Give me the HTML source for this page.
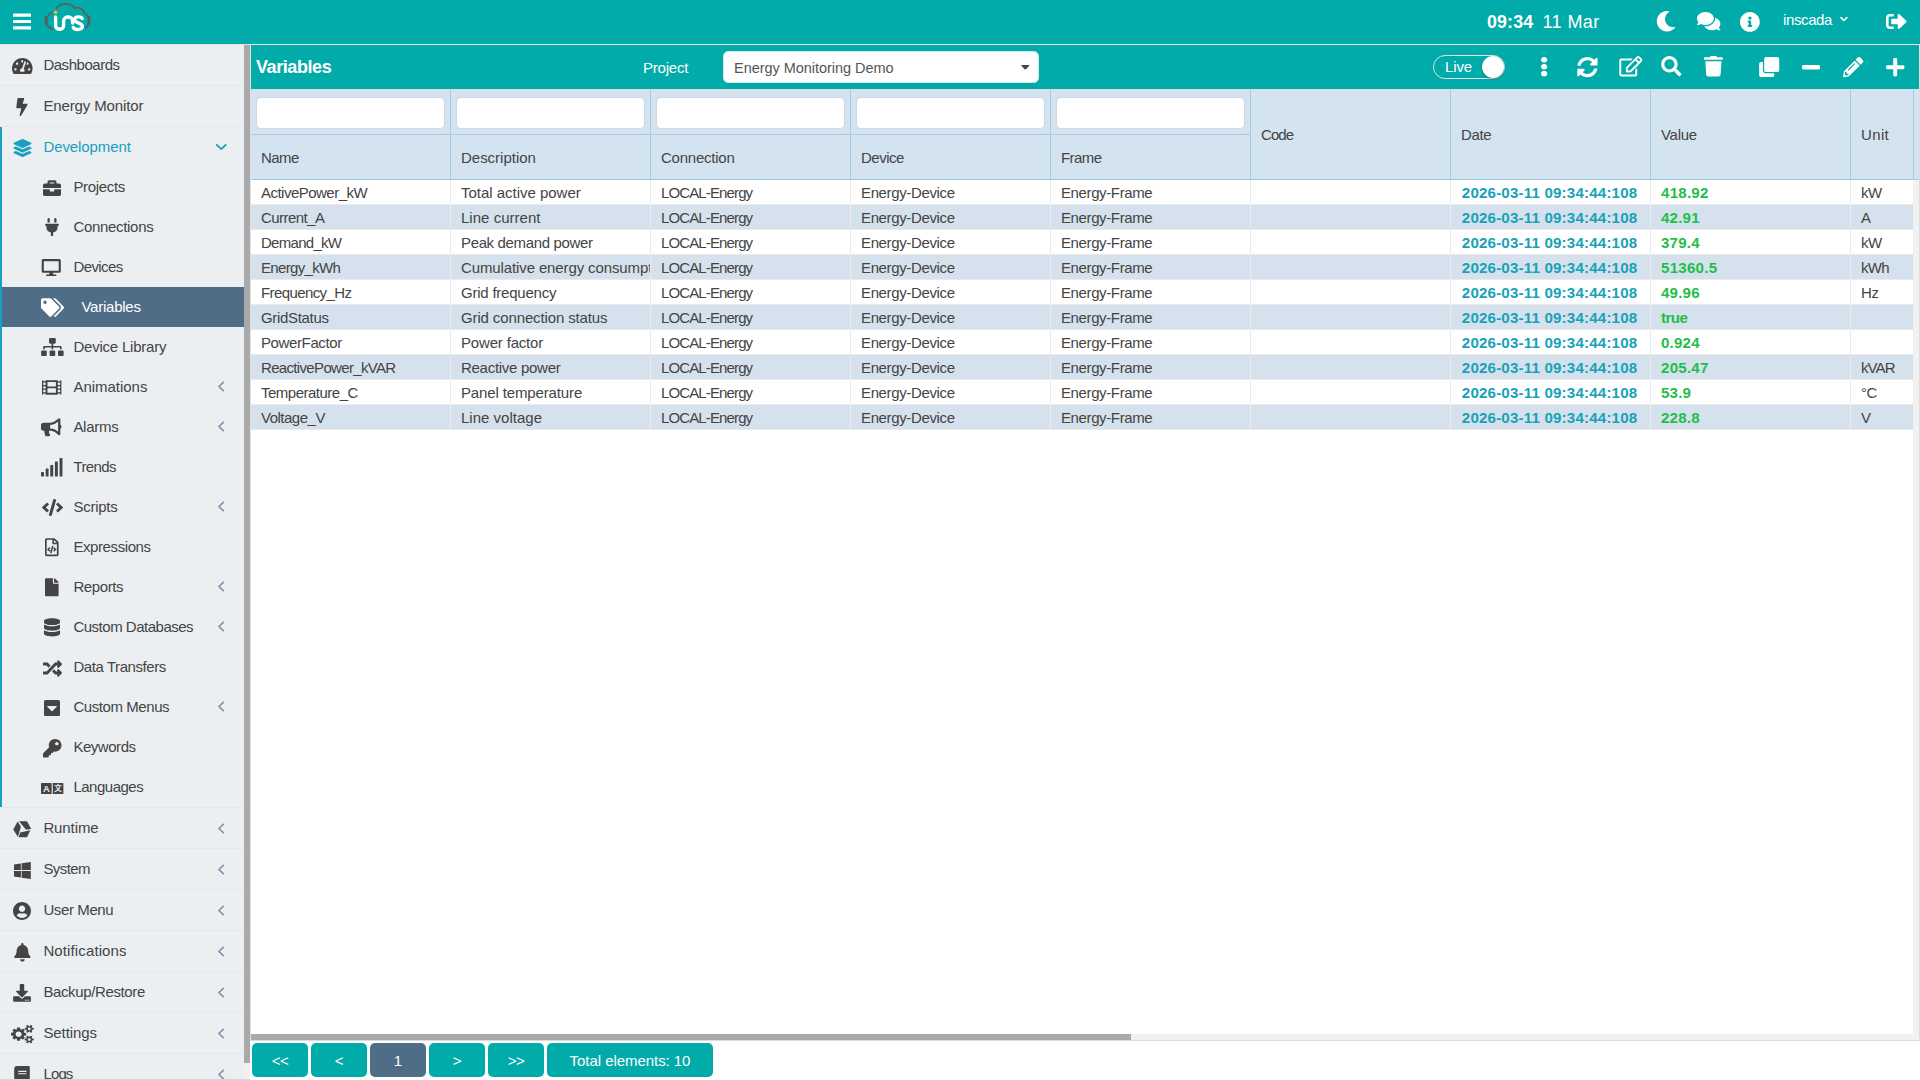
<!DOCTYPE html><html><head><meta charset="utf-8"><title>Variables</title><style>
*{box-sizing:border-box}
html,body{margin:0;padding:0}
body{width:1920px;height:1080px;overflow:hidden;position:relative;background:#fff;font-family:"Liberation Sans", sans-serif;font-size:15.0px;color:#444444;}
.ic{position:absolute;display:block;overflow:visible}
.t{white-space:nowrap}
.abs{position:absolute}
#topbar{position:absolute;left:0;top:0;width:1920px;height:45px;background:#00abaa;border-bottom:1px solid #ebe3e3}
#clock{position:absolute;left:1487px;top:0;line-height:45px;color:#fff;font-family:"Liberation Sans", sans-serif;font-size:17.3px;white-space:nowrap}
#clock b{font-size:17.8px;letter-spacing:.15px}
#clock span{margin-left:9.3px;font-size:18px;letter-spacing:.4px}
#side{position:absolute;left:0;top:45px;width:244px;height:1035px;background:#ebeff2;overflow:hidden}
.mi{position:absolute;left:0;width:244px;height:41px;border-bottom:1px solid #e3e6ea;}
.mi .t,.si .t{position:absolute;top:0;line-height:40px}
.mi .t{left:43.4px}
.si{position:absolute;left:2px;width:242px;height:40px}
.si .t{left:71.4px}
.si.act{background:#4f6d87;color:#fff}
.si.act .t{left:79.4px}
#sscroll{position:absolute;left:244px;top:45px;width:6px;height:1035px;background:#f1f1f1}
#sscroll i{position:absolute;left:0;top:0;width:6px;height:1018px;background:#a9a9a9}
#panel{position:absolute;left:250px;top:45px;width:1670px;height:996px;border-left:1px solid #e3dede;border-right:1px solid #dedede;border-bottom:1px solid #dcdcdc;background:#fff}
#phead{position:absolute;left:0;top:0;width:1668px;height:44px;background:#00abaa}
#title{position:absolute;left:5px;top:0;line-height:44px;font-family:"Liberation Sans", sans-serif;font-weight:bold;font-size:18px;letter-spacing:-.42px;color:#fff}
#pline{position:absolute;left:0;top:44px;width:1668px;height:1px;background:#dcdcdc}
#thead{position:absolute;left:0;top:45px;width:1668px;height:90px;background:#d4e3f0;border-bottom:1px solid #9fc9e3}
.hc{position:absolute;top:0;height:89px;border-right:1px solid #a9cbe2}
.hc .fl{position:absolute;left:0;right:0;top:0;height:45px;border-bottom:1px solid #a9cbe2}
.fi{position:absolute;left:5px;top:7px;width:189px;height:32px;background:#fff;border:1px solid #ccd7e7;border-radius:5px}
.hc .t{position:absolute;left:10px}
.row{position:absolute;left:0;width:1662px;height:25px;line-height:25px}
.row.s{background:#d5e1ed}
.c{position:absolute;top:0;height:25px;overflow:hidden;border-right:1px solid #ebebeb;border-bottom:1px solid #ebebeb;padding-left:10px}
.c.d{padding-left:10.8px;color:#17a2b8;font-weight:bold;font-size:15.1px;line-height:25.6px}
.c.v{color:#1fbe4a;font-weight:bold;font-size:15.1px;line-height:25.6px}
.btn{position:absolute;top:998px;height:34px;border-radius:5px;background:#00abaa;color:#fff;text-align:center;line-height:36.5px}
</style></head><body>
<div id="topbar">
<svg class="ic" style="left:13px;top:13px" width="18" height="17" viewBox="0 0 18 17" fill="#fff"><rect x="0" y="0.6" width="18" height="3.2" rx=".5"/><rect x="0" y="7" width="18" height="3" rx=".5"/><rect x="0" y="13.3" width="18" height="3.1" rx=".5"/></svg>
<svg class="ic" style="left:40px;top:0px" width="60" height="40" viewBox="0 0 60 40" fill="none" stroke-linecap="round" stroke-linejoin="round">
<g stroke="#5e5b5d" stroke-width="1.7">
<path d="M11.6 12.6 C7.6 15.2 6 18.6 6.2 21.6 C6.4 24.6 8.6 27.6 12.3 29.2"/>
<path d="M16.6 8.4 C18.4 5.4 22 3.7 26 3.8 C29.6 3.9 32.8 5.6 34.6 8.2 C36.6 7.4 39 7.4 41 8.6 C43 9.8 44.2 11.4 44.5 13.4 C47 15 48.7 17.6 48.9 20.4 C49.1 23.2 47.8 26 45.6 28"/>
</g>
<path d="M6.1 17.4 V23.6" stroke="#5e5b5d" stroke-width="2.6"/>
<path d="M49 17.6 V23.4" stroke="#5e5b5d" stroke-width="2.6"/>
<circle cx="15.5" cy="12.2" r="1.75" fill="#fdb714"/>
<g stroke="#fff" stroke-width="3.4">
<path d="M15.6 17 V25.6 C15.6 30.4 23.6 30.4 23.6 25.6 V21 C23.6 15.6 32.6 15.6 32.6 21 V23"/>
<path d="M42.2 18.6 C41.2 16.4 35.2 16 34.4 19.6 C33.8 22.6 41.8 22.8 42.4 26 C43 29.8 35.4 30.8 33.2 27.4"/>
</g></svg>
<span id="clock"><b>09:34</b><span>11 Mar</span></span>
<svg class="ic" style="left:1656.00px;top:11.00px" width="20.00" height="20.60" viewBox="27 0 459 512" preserveAspectRatio="xMidYMid meet" fill="#fff" ><path d="M283.211 512c78.962 0 151.079-35.925 198.857-94.792 7.068-8.708-.639-21.43-11.562-19.35-124.203 23.654-238.262-71.576-238.262-196.954 0-72.222 38.662-138.635 101.498-174.394 9.686-5.512 7.25-20.197-3.756-22.23A258.156 258.156 0 0 0 283.211 0c-141.309 0-256 114.511-256 256 0 141.309 114.511 256 256 256z"/></svg>
<svg class="ic" style="left:1697.40px;top:12.30px" width="23.40" height="18.20" viewBox="0 32 576 448" preserveAspectRatio="xMidYMid meet" fill="#fff" ><path d="M416 192c0-88.400-93.100-160-208-160S0 103.600 0 192c0 34.300 14.100 65.900 38 92-13.400 30.200-35.500 54.200-35.800 54.500-2.200 2.300-2.800 5.700-1.500 8.700S4.800 352 8 352c36.600 0 66.900-12.300 88.700-25 32.200 15.700 70.300 25 111.300 25 114.900 0 208-71.600 208-160zm122 220c23.900-26 38-57.700 38-92 0-66.900-53.500-124.200-129.300-148.100.9 6.600 1.300 13.300 1.300 20.100 0 105.900-107.700 192-240 192-10.800 0-21.300-.800-31.700-1.900C207.800 439.600 281.800 480 368 480c41 0 79.100-9.200 111.300-25 21.800 12.700 52.100 25 88.700 25 3.200 0 6.100-1.900 7.300-4.800 1.300-2.900.7-6.300-1.500-8.700-.3-.300-22.400-24.200-35.800-54.500z"/></svg>
<svg class="ic" style="left:1740.20px;top:11.60px" width="19.80" height="19.80" viewBox="8 8 496 496" preserveAspectRatio="xMidYMid meet" fill="#fff" ><path d="M256 8C119.043 8 8 119.083 8 256c0 136.997 111.043 248 248 248s248-111.003 248-248C504 119.083 392.957 8 256 8zm0 110c23.196 0 42 18.804 42 42s-18.804 42-42 42-42-18.804-42-42 18.804-42 42-42zm56 254c0 6.627-5.373 12-12 12h-88c-6.627 0-12-5.373-12-12v-24c0-6.627 5.373-12 12-12h12v-64h-12c-6.627 0-12-5.373-12-12v-24c0-6.627 5.373-12 12-12h64c6.627 0 12 5.373 12 12v100h12c6.627 0 12 5.373 12 12v24z"/></svg>
<span class="abs" style="left:1783px;top:0;line-height:39px;color:#fff"><span class="t " style="letter-spacing:-0.380px;">inscada</span></span>
<svg class="ic" style="left:1838px;top:14px" width="12" height="10" viewBox="0 0 12 10" fill="none" stroke="#fff" stroke-width="1.6" stroke-linecap="round" stroke-linejoin="round"><path d="M3 3.6 L5.9 6.5 L8.8 3.6"/></svg>
<svg class="ic" style="left:1885.50px;top:14.10px" width="20.50" height="15.00" viewBox="0 64 504 384" preserveAspectRatio="none" fill="#fff" ><path d="M497 273L329 441c-15 15-41 4.500-41-17v-96H152c-13.300 0-24-10.700-24-24v-96c0-13.300 10.700-24 24-24h136V88c0-21.400 25.900-32 41-17l168 168c9.300 9.400 9.300 24.600 0 34zM192 436v-40c0-6.600-5.400-12-12-12H96c-17.700 0-32-14.300-32-32V160c0-17.700 14.300-32 32-32h84c6.600 0 12-5.400 12-12V76c0-6.600-5.400-12-12-12H96c-53 0-96 43-96 96v192c0 53 43 96 96 96h84c6.600 0 12-5.400 12-12z"/></svg>
</div>
<div id="side">
<div class="mi" style="top:0px;"><svg class="ic" style="left:11.70px;top:13.00px" width="20.60" height="16.00" viewBox="0 32 576 448" preserveAspectRatio="xMidYMid meet" fill="#444" ><path d="M288 32C128.940 32 0 160.940 0 320c0 52.800 14.250 102.260 39.060 144.800 5.610 9.620 16.300 15.200 27.440 15.200h443c11.140 0 21.830-5.580 27.440-15.200C561.750 422.260 576 372.800 576 320c0-159.060-128.940-288-288-288zm0 64c14.710 0 26.580 10.130 30.320 23.650-1.110 2.260-2.640 4.230-3.450 6.670l-9.220 27.670c-5.130 3.490-10.970 6.010-17.640 6.010-17.670 0-32-14.330-32-32S270.330 96 288 96zM96 384c-17.670 0-32-14.330-32-32s14.330-32 32-32 32 14.330 32 32-14.330 32-32 32zm48-160c-17.670 0-32-14.330-32-32s14.330-32 32-32 32 14.330 32 32-14.330 32-32 32zm246.770-72.410l-61.330 184C343.130 347.330 352 364.540 352 384c0 11.720-3.380 22.550-8.880 32H232.880c-5.500-9.450-8.880-20.280-8.880-32 0-33.940 26.500-61.430 59.900-63.590l61.340-184.010c4.170-12.560 17.730-19.450 30.360-15.170 12.570 4.190 19.350 17.790 15.170 30.360zm14.660 57.200l15.520-46.550c3.470-1.290 7.130-2.230 11.050-2.230 17.670 0 32 14.330 32 32s-14.330 32-32 32c-11.380-.010-20.890-6.280-26.570-15.220zM480 384c-17.670 0-32-14.330-32-32s14.330-32 32-32 32 14.330 32 32-14.330 32-32 32z"/></svg><span class="t " style="letter-spacing:-0.472px;">Dashboards</span></div>
<div class="mi" style="top:41px;"><svg class="ic" style="left:16.00px;top:12.00px" width="11.80" height="18.00" viewBox="0 0 320 512" preserveAspectRatio="xMidYMid meet" fill="#444" ><path d="M296 160H180.600l42.600-129.800C227.200 15 215.700 0 200 0H56C44 0 33.800 8.900 32.200 20.800l-32 240C-1.700 275.200 9.500 288 24 288h118.700L96.600 482.500c-3.600 15.200 8 29.500 23.300 29.500 8.400 0 16.400-4.400 20.800-12l176-304c9.300-15.900-2.200-36-20.700-36z"/></svg><span class="t " style="letter-spacing:-0.131px;">Energy Monitor</span></div>
<div class="abs" style="left:0;top:82px;width:2px;height:680px;background:#1a9fbe"></div>
<div class="mi" style="top:82px;color:#1a9fbe;border-bottom:none;"><svg class="ic" style="left:12.80px;top:11.80px" width="19.00" height="18.00" viewBox="0 0 512 512" preserveAspectRatio="xMidYMid meet" fill="#1a9fbe" ><path d="M12.410 148.020l232.940 105.670c6.800 3.090 14.490 3.090 21.290 0l232.940-105.670c16.550-7.510 16.550-32.520 0-40.030L266.650 2.310a25.607 25.607 0 0 0-21.290 0L12.410 107.980c-16.550 7.510-16.550 32.530 0 40.040zm487.180 88.280l-58.090-26.330-161.640 73.270c-7.560 3.430-15.590 5.170-23.860 5.170s-16.290-1.740-23.860-5.170L70.510 209.970l-58.100 26.330c-16.550 7.500-16.550 32.500 0 40l232.940 105.590c6.800 3.080 14.490 3.080 21.290 0L499.590 276.300c16.550-7.500 16.550-32.500 0-40zm0 127.800l-57.870-26.230-161.860 73.370c-7.560 3.430-15.590 5.170-23.860 5.170s-16.290-1.740-23.860-5.170L70.290 337.870 12.410 364.100c-16.550 7.500-16.550 32.500 0 40l232.940 105.590c6.800 3.080 14.490 3.080 21.290 0L499.590 404.100c16.550-7.500 16.550-32.500 0-40z"/></svg><span class="t " style="letter-spacing:-0.092px;">Development</span><svg class="ic" style="left:214px;top:14px" width="14" height="12" viewBox="0 0 14 12" fill="none" stroke="#1a9fbe" stroke-width="1.8" stroke-linecap="round" stroke-linejoin="round"><path d="M2.8 3.8 L7.3 8.2 L11.7 3.8"/></svg></div>
<div class="si" style="top:122px"><svg class="ic" style="left:41.00px;top:12.50px" width="18.00" height="16.00" viewBox="0 32 512 448" preserveAspectRatio="xMidYMid meet" fill="#444" ><path d="M320 336c0 8.840-7.160 16-16 16h-96c-8.840 0-16-7.160-16-16v-48H0v144c0 25.600 22.400 48 48 48h416c25.600 0 48-22.400 48-48V288H320v48zm144-208h-80V80c0-25.600-22.400-48-48-48H176c-25.600 0-48 22.400-48 48v48H48c-25.600 0-48 22.400-48 48v80h512v-80c0-25.600-22.400-48-48-48zm-144 0H192V96h128v32z"/></svg><span class="t " style="letter-spacing:-0.335px;">Projects</span></div>
<div class="si" style="top:162px"><svg class="ic" style="left:43.00px;top:11.00px" width="14.00" height="18.00" viewBox="0 0 384 512" preserveAspectRatio="xMidYMid meet" fill="#444" ><path d="M320 32a32 32 0 0 0-64 0v96h64zm48 128H16a16 16 0 0 0-16 16v32a16 16 0 0 0 16 16h16v32a160.070 160.070 0 0 0 128 156.800V512h64v-99.200A160.070 160.070 0 0 0 352 256v-32h16a16 16 0 0 0 16-16v-32a16 16 0 0 0-16-16zM128 32a32 32 0 0 0-64 0v96h64z"/></svg><span class="t " style="letter-spacing:-0.312px;">Connections</span></div>
<div class="si" style="top:202px"><svg class="ic" style="left:39.00px;top:12.00px" width="20.50" height="17.00" viewBox="0 0 576 512" preserveAspectRatio="xMidYMid meet" fill="#444" ><path d="M528 0H48C21.500 0 0 21.500 0 48v320c0 26.500 21.500 48 48 48h192l-16 48h-72c-13.300 0-24 10.700-24 24s10.700 24 24 24h272c13.300 0 24-10.700 24-24s-10.700-24-24-24h-72l-16-48h192c26.500 0 48-21.500 48-48V48c0-26.500-21.500-48-48-48zm-16 352H64V64h448v288z"/></svg><span class="t " style="letter-spacing:-0.581px;">Devices</span></div>
<div class="si act" style="top:242px"><svg class="ic" style="left:38.50px;top:10.50px" width="23.00" height="19.00" viewBox="0 0 640 512" preserveAspectRatio="xMidYMid meet" fill="#fff" ><path d="M497.941 225.941L286.059 14.059A48 48 0 0 0 252.118 0H48C21.490 0 0 21.490 0 48v204.118a48 48 0 0 0 14.059 33.941l211.882 211.882c18.744 18.745 49.136 18.746 67.882 0l204.118-204.118c18.745-18.745 18.745-49.137 0-67.882zM112 160c-26.510 0-48-21.490-48-48s21.490-48 48-48 48 21.490 48 48-21.490 48-48 48zm513.941 133.823L421.823 497.941c-18.745 18.745-49.137 18.745-67.882 0l-.360-.360L527.640 323.522c16.999-16.999 26.360-39.600 26.360-63.640s-9.362-46.641-26.360-63.640L331.397 0h48.721a48 48 0 0 1 33.941 14.059l211.882 211.882c18.745 18.745 18.745 49.137 0 67.882z"/></svg><span class="t " style="letter-spacing:-0.229px;">Variables</span></div>
<div class="si" style="top:282px"><svg class="ic" style="left:38.60px;top:11.00px" width="22.80" height="18.00" viewBox="0 0 640 512" preserveAspectRatio="xMidYMid meet" fill="#444" ><path d="M128 352H32c-17.670 0-32 14.330-32 32v96c0 17.670 14.330 32 32 32h96c17.670 0 32-14.330 32-32v-96c0-17.670-14.330-32-32-32zm-24-80h192v48h48v-48h192v48h48v-57.590c0-21.170-17.230-38.410-38.410-38.410H344v-64h40c17.670 0 32-14.330 32-32V32c0-17.670-14.330-32-32-32H256c-17.670 0-32 14.330-32 32v96c0 17.670 14.330 32 32 32h40v64H94.410C73.230 224 56 241.230 56 262.410V320h48v-48zm264 80h-96c-17.670 0-32 14.330-32 32v96c0 17.670 14.330 32 32 32h96c17.670 0 32-14.330 32-32v-96c0-17.670-14.330-32-32-32zm240 0h-96c-17.670 0-32 14.330-32 32v96c0 17.670 14.330 32 32 32h96c17.670 0 32-14.330 32-32v-96c0-17.670-14.330-32-32-32z"/></svg><span class="t " style="letter-spacing:-0.215px;">Device Library</span></div>
<div class="si" style="top:322px"><svg class="ic" style="left:39.80px;top:11.60px" width="19.40" height="16.80" viewBox="0 64 512 384" preserveAspectRatio="xMidYMid meet" fill="#444" ><path d="M488 64h-8v20c0 6.600-5.400 12-12 12h-40c-6.600 0-12-5.400-12-12V64H96v20c0 6.600-5.400 12-12 12H44c-6.600 0-12-5.400-12-12V64h-8C10.700 64 0 74.700 0 88v336c0 13.300 10.700 24 24 24h8v-20c0-6.600 5.400-12 12-12h40c6.600 0 12 5.400 12 12v20h320v-20c0-6.600 5.400-12 12-12h40c6.600 0 12 5.400 12 12v20h8c13.300 0 24-10.700 24-24V88c0-13.300-10.700-24-24-24zM96 372c0 6.600-5.400 12-12 12H44c-6.600 0-12-5.400-12-12v-40c0-6.600 5.400-12 12-12h40c6.600 0 12 5.400 12 12v40zm0-96c0 6.600-5.400 12-12 12H44c-6.600 0-12-5.400-12-12v-40c0-6.600 5.400-12 12-12h40c6.600 0 12 5.400 12 12v40zm0-96c0 6.600-5.400 12-12 12H44c-6.600 0-12-5.400-12-12v-40c0-6.600 5.400-12 12-12h40c6.600 0 12 5.400 12 12v40zm272 208c0 6.600-5.400 12-12 12H156c-6.600 0-12-5.400-12-12v-96c0-6.600 5.400-12 12-12h200c6.600 0 12 5.400 12 12v96zm0-168c0 6.600-5.400 12-12 12H156c-6.600 0-12-5.400-12-12v-96c0-6.600 5.400-12 12-12h200c6.600 0 12 5.400 12 12v96zm112 152c0 6.600-5.400 12-12 12h-40c-6.600 0-12-5.400-12-12v-40c0-6.600 5.400-12 12-12h40c6.600 0 12 5.400 12 12v40zm0-96c0 6.600-5.400 12-12 12h-40c-6.600 0-12-5.400-12-12v-40c0-6.600 5.400-12 12-12h40c6.600 0 12 5.400 12 12v40zm0-96c0 6.600-5.400 12-12 12h-40c-6.600 0-12-5.400-12-12v-40c0-6.600 5.400-12 12-12h40c6.600 0 12 5.400 12 12v40z"/></svg><span class="t " style="letter-spacing:-0.019px;">Animations</span><svg class="ic" style="left:214px;top:13.3px" width="10" height="14" viewBox="0 0 10 14" fill="none" stroke="#8291a8" stroke-width="1.6" stroke-linecap="round" stroke-linejoin="round"><path d="M7.3 2.3 L2.9 6.5 L7.3 10.7"/></svg></div>
<div class="si" style="top:362px"><svg class="ic" style="left:39.00px;top:11.00px" width="20.50" height="18.50" viewBox="0 0 576 512" preserveAspectRatio="xMidYMid meet" fill="#444" ><path d="M576 240c0-23.630-12.950-44.040-32-55.120V32.010C544 23.260 537.020 0 512 0c-7.120 0-14.190 2.380-19.980 7.020l-85.030 68.030C364.280 109.190 310.660 128 256 128H64c-35.350 0-64 28.650-64 64v96c0 35.350 28.650 64 64 64h33.700c-1.390 10.480-2.180 21.140-2.180 32 0 39.770 9.260 77.350 25.560 110.940 5.190 10.690 16.520 17.060 28.400 17.060h74.280c26.050 0 41.690-29.840 25.900-50.560-16.400-21.520-26.150-48.360-26.150-77.440 0-11.110 1.620-21.790 4.410-32H256c54.660 0 108.280 18.810 150.980 52.950l85.030 68.030a32.023 32.023 0 0 0 19.980 7.020c24.920 0 32-22.780 32-32V295.130C563.050 284.040 576 263.630 576 240zm-96 141.420l-33.050-26.440C392.950 311.780 325.120 288 256 288v-96c69.120 0 136.950-23.780 190.950-66.980L480 98.580v282.840z"/></svg><span class="t " style="letter-spacing:-0.284px;">Alarms</span><svg class="ic" style="left:214px;top:13.3px" width="10" height="14" viewBox="0 0 10 14" fill="none" stroke="#8291a8" stroke-width="1.6" stroke-linecap="round" stroke-linejoin="round"><path d="M7.3 2.3 L2.9 6.5 L7.3 10.7"/></svg></div>
<div class="si" style="top:402px"><svg class="ic" style="left:39.00px;top:11.00px" width="21.50" height="18.50" viewBox="24 0 592 512" preserveAspectRatio="xMidYMid meet" fill="#444" ><path d="M216 288h-48c-8.840 0-16 7.160-16 16v192c0 8.840 7.160 16 16 16h48c8.840 0 16-7.160 16-16V304c0-8.840-7.160-16-16-16zM88 384H40c-8.840 0-16 7.160-16 16v96c0 8.840 7.160 16 16 16h48c8.840 0 16-7.160 16-16v-96c0-8.840-7.160-16-16-16zm256-192h-48c-8.840 0-16 7.160-16 16v288c0 8.840 7.160 16 16 16h48c8.840 0 16-7.160 16-16V208c0-8.840-7.160-16-16-16zm128-96h-48c-8.840 0-16 7.160-16 16v384c0 8.840 7.160 16 16 16h48c8.840 0 16-7.160 16-16V112c0-8.840-7.160-16-16-16zM600 0h-48c-8.840 0-16 7.160-16 16v480c0 8.840 7.160 16 16 16h48c8.840 0 16-7.160 16-16V16c0-8.840-7.160-16-16-16z"/></svg><span class="t " style="letter-spacing:-0.613px;">Trends</span></div>
<div class="si" style="top:442px"><svg class="ic" style="left:38.50px;top:12.00px" width="23.00" height="17.00" viewBox="0 0 640 512" preserveAspectRatio="xMidYMid meet" fill="#444" ><path d="M278.900 511.500l-61-17.700c-6.400-1.800-10-8.500-8.200-14.900L346.200 8.700c1.800-6.400 8.500-10 14.900-8.200l61 17.700c6.400 1.800 10 8.500 8.200 14.900L293.800 503.300c-1.900 6.400-8.500 10.100-14.900 8.200zm-114-112.200l43.500-46.400c4.600-4.900 4.300-12.700-.8-17.200L117 256l90.600-79.700c5.100-4.500 5.500-12.300.8-17.200l-43.500-46.400c-4.500-4.800-12.100-5.100-17-.5L3.800 247.200c-5.100 4.700-5.100 12.800 0 17.500l144.100 135.100c4.900 4.600 12.500 4.400 17-.5zm327.200.6l144.100-135.100c5.100-4.700 5.100-12.800 0-17.500L492.100 112.100c-4.800-4.500-12.400-4.300-17 .5L431.600 159c-4.600 4.900-4.300 12.700.8 17.200L523 256l-90.600 79.700c-5.100 4.500-5.500 12.300-.8 17.200l43.500 46.400c4.500 4.900 12.100 5.100 17 .6z"/></svg><span class="t " style="letter-spacing:-0.240px;">Scripts</span><svg class="ic" style="left:214px;top:13.3px" width="10" height="14" viewBox="0 0 10 14" fill="none" stroke="#8291a8" stroke-width="1.6" stroke-linecap="round" stroke-linejoin="round"><path d="M7.3 2.3 L2.9 6.5 L7.3 10.7"/></svg></div>
<div class="si" style="top:482px"><svg class="ic" style="left:43.20px;top:11.00px" width="13.60" height="18.40" viewBox="0 0 384 512" preserveAspectRatio="xMidYMid meet" fill="#444" ><path d="M149.900 349.100l-.200-.200-32.800-28.900 32.800-28.900c3.600-3.200 4-8.800.800-12.400l-.200-.200-17.400-18.600c-3.400-3.600-9-3.700-12.400-.400l-57.700 54.100c-3.700 3.500-3.700 9.400 0 12.800l57.700 54.100c1.600 1.500 3.800 2.400 6 2.400 2.400 0 4.800-1 6.400-2.800l17.400-18.600c3.300-3.500 3.100-9.100-.400-12.400zm220-251.200L286 14C277 5 264.800-.100 252.100-.100H48C21.500 0 0 21.500 0 48v416c0 26.500 21.500 48 48 48h288c26.500 0 48-21.500 48-48V131.900c0-12.700-5.100-25-14.100-34zM256 51.900l76.100 76.100H256zM336 464H48V48h160v104c0 13.300 10.700 24 24 24h104zM209.600 214c-4.700-1.400-9.500 1.300-10.900 6L144 408.100c-1.400 4.700 1.300 9.600 6 10.900l24.400 7.100c4.700 1.400 9.600-1.400 10.900-6L240 231.900c1.400-4.700-1.300-9.600-6-10.900zm24.500 76.900l.200.200 32.800 28.900-32.800 28.900c-3.600 3.200-4 8.800-.800 12.400l.200.200 17.400 18.600c3.300 3.500 8.900 3.700 12.400.4l57.700-54.100c3.700-3.500 3.700-9.400 0-12.800l-57.700-54.100c-3.500-3.300-9.100-3.200-12.400.400l-17.400 18.600c-3.300 3.500-3.100 9.100.400 12.400z"/></svg><span class="t " style="letter-spacing:-0.406px;">Expressions</span></div>
<div class="si" style="top:522px"><svg class="ic" style="left:43.20px;top:11.00px" width="13.60" height="18.40" viewBox="0 0 384 512" preserveAspectRatio="xMidYMid meet" fill="#444" ><path d="M224 136V0H24C10.700 0 0 10.700 0 24v464c0 13.300 10.700 24 24 24h336c13.300 0 24-10.700 24-24V160H248c-13.200 0-24-10.800-24-24zm160-14.100v6.100H256V0h6.100c6.400 0 12.500 2.500 17 7l97.900 98c4.500 4.500 7 10.600 7 16.900z"/></svg><span class="t " style="letter-spacing:-0.404px;">Reports</span><svg class="ic" style="left:214px;top:13.3px" width="10" height="14" viewBox="0 0 10 14" fill="none" stroke="#8291a8" stroke-width="1.6" stroke-linecap="round" stroke-linejoin="round"><path d="M7.3 2.3 L2.9 6.5 L7.3 10.7"/></svg></div>
<div class="si" style="top:562px"><svg class="ic" style="left:42.00px;top:11.00px" width="16.00" height="18.60" viewBox="0 0 448 512" preserveAspectRatio="xMidYMid meet" fill="#444" ><path d="M448 73.143v45.714C448 159.143 347.667 192 224 192S0 159.143 0 118.857V73.143C0 32.857 100.333 0 224 0s224 32.857 224 73.143zM448 176v102.857C448 319.143 347.667 352 224 352S0 319.143 0 278.857V176c48.125 33.143 136.208 48.572 224 48.572S399.874 209.143 448 176zm0 160v102.857C448 479.143 347.667 512 224 512S0 479.143 0 438.857V336c48.125 33.143 136.208 48.572 224 48.572S399.874 369.143 448 336z"/></svg><span class="t " style="letter-spacing:-0.489px;">Custom Databases</span><svg class="ic" style="left:214px;top:13.3px" width="10" height="14" viewBox="0 0 10 14" fill="none" stroke="#8291a8" stroke-width="1.6" stroke-linecap="round" stroke-linejoin="round"><path d="M7.3 2.3 L2.9 6.5 L7.3 10.7"/></svg></div>
<div class="si" style="top:602px"><svg class="ic" style="left:40.50px;top:12.50px" width="19.00" height="17.00" viewBox="0 32 512 448" preserveAspectRatio="xMidYMid meet" fill="#444" ><path d="M504.971 359.029c9.373 9.373 9.373 24.569 0 33.941l-80 79.984c-15.010 15.010-40.971 4.490-40.971-16.971V416h-58.785a12.004 12.004 0 0 1-8.773-3.812l-70.556-75.596 53.333-57.143L352 336h32v-39.981c0-21.438 25.943-31.998 40.971-16.971l80 79.981zM12 176h84l52.781 56.551 53.333-57.143-70.556-75.596A11.999 11.999 0 0 0 122.785 96H12c-6.627 0-12 5.373-12 12v56c0 6.627 5.373 12 12 12zm372 0v39.984c0 21.460 25.961 31.980 40.971 16.971l80-79.984c9.373-9.373 9.373-24.569 0-33.941l-80-79.981C409.943 24.021 384 34.582 384 56.019V96h-58.785a12.004 12.004 0 0 0-8.773 3.812L96 336H12c-6.627 0-12 5.373-12 12v56c0 6.627 5.373 12 12 12h110.785c3.326 0 6.503-1.381 8.773-3.812L352 176h32z"/></svg><span class="t " style="letter-spacing:-0.416px;">Data Transfers</span></div>
<div class="si" style="top:642px"><svg class="ic" style="left:42.00px;top:12.60px" width="16.00" height="16.20" viewBox="0 32 448 448" preserveAspectRatio="xMidYMid meet" fill="#444" ><path d="M448 80v352c0 26.500-21.500 48-48 48H48c-26.500 0-48-21.500-48-48V80c0-26.500 21.500-48 48-48h352c26.500 0 48 21.500 48 48zM92.500 220.500l123 123c4.700 4.700 12.300 4.700 17 0l123-123c7.600-7.600 2.200-20.500-8.500-20.500h-246c-10.700 0-16.100 12.900-8.500 20.500z"/></svg><span class="t " style="letter-spacing:-0.425px;">Custom Menus</span><svg class="ic" style="left:214px;top:13.3px" width="10" height="14" viewBox="0 0 10 14" fill="none" stroke="#8291a8" stroke-width="1.6" stroke-linecap="round" stroke-linejoin="round"><path d="M7.3 2.3 L2.9 6.5 L7.3 10.7"/></svg></div>
<div class="si" style="top:682px"><svg class="ic" style="left:40.50px;top:11.50px" width="18.50" height="18.50" viewBox="0 0 512 512" preserveAspectRatio="xMidYMid meet" fill="#444" ><path d="M512 176.001C512 273.203 433.202 352 336 352c-11.220 0-22.190-1.062-32.827-3.069l-24.012 27.014A23.999 23.999 0 0 1 261.223 384H224v40c0 13.255-10.745 24-24 24h-40v40c0 13.255-10.745 24-24 24H24c-13.255 0-24-10.745-24-24v-78.059c0-6.365 2.529-12.470 7.029-16.971l161.802-161.802C163.108 213.814 160 195.271 160 176 160 78.798 238.797.001 335.999 0 433.488-.001 512 78.511 512 176.001zM336 128c0 26.510 21.490 48 48 48s48-21.490 48-48-21.490-48-48-48-48 21.490-48 48z"/></svg><span class="t " style="letter-spacing:-0.458px;">Keywords</span></div>
<div class="si" style="top:722px"><svg class="ic" style="left:38.80px;top:14.50px" width="22.40" height="13.00" viewBox="0 96 640 320" preserveAspectRatio="xMidYMid meet" fill="#444" ><path d="M24 96h280v320H24c-13.300 0-24-10.700-24-24V120c0-13.300 10.700-24 24-24zM336 96h280c13.300 0 24 10.700 24 24v272c0 13.300-10.700 24-24 24H336z"/><text x="152" y="344" text-anchor="middle" font-family="Liberation Sans, sans-serif" font-weight="bold" font-size="268" fill="#ebeff2">A</text><text x="488" y="336" text-anchor="middle" font-family="Liberation Sans, Noto Sans CJK SC, sans-serif" font-weight="bold" font-size="216" fill="#ebeff2">文</text></svg><span class="t " style="letter-spacing:-0.490px;">Languages</span></div>
<div class="abs" style="left:0;top:762px;width:244px;height:1px;background:#e3e6ea"></div>
<div class="mi" style="top:763px;"><svg class="ic" style="left:12.80px;top:12.70px" width="18.40" height="16.30" viewBox="12.8 820.7 18.4 16.3" preserveAspectRatio="xMidYMid meet" fill="#444" ><path d="M17.44 821.19L13 829.19L17.74 836.6L20.7 826.22z M18.78 820.85H26.78L31.07 828.59L25.89 829.48z M19.96 832.15L30.19 829.93L26.78 836.9H18.48z"/></svg><span class="t " style="letter-spacing:-0.099px;">Runtime</span><svg class="ic" style="left:216px;top:14px" width="10" height="14" viewBox="0 0 10 14" fill="none" stroke="#8291a8" stroke-width="1.6" stroke-linecap="round" stroke-linejoin="round"><path d="M7.3 2.3 L2.9 6.5 L7.3 10.7"/></svg></div>
<div class="mi" style="top:804px;"><svg class="ic" style="left:13.60px;top:12.50px" width="16.80" height="17.00" viewBox="0 32 448 448" preserveAspectRatio="xMidYMid meet" fill="#444" ><path d="M0 93.700l183.600-25.300v177.400H0V93.700zm0 324.600l183.600 25.300V268.400H0v149.900zm203.800 28L448 480V268.400H203.800v177.900zm0-380.600v180.100H448V32L203.800 65.700z"/></svg><span class="t " style="letter-spacing:-0.584px;">System</span><svg class="ic" style="left:216px;top:14px" width="10" height="14" viewBox="0 0 10 14" fill="none" stroke="#8291a8" stroke-width="1.6" stroke-linecap="round" stroke-linejoin="round"><path d="M7.3 2.3 L2.9 6.5 L7.3 10.7"/></svg></div>
<div class="mi" style="top:845px;"><svg class="ic" style="left:13.00px;top:12.00px" width="18.00" height="18.00" viewBox="0 8 496 496" preserveAspectRatio="xMidYMid meet" fill="#444" ><path d="M248 8C111 8 0 119 0 256s111 248 248 248 248-111 248-248S385 8 248 8zm0 96c48.600 0 88 39.400 88 88s-39.400 88-88 88-88-39.400-88-88 39.400-88 88-88zm0 344c-58.700 0-111.300-26.600-146.500-68.200 18.800-35.400 55.600-59.800 98.500-59.800 2.400 0 4.800.400 7.100 1.100 13 4.200 26.600 6.900 40.900 6.900 14.300 0 28-2.700 40.900-6.900 2.300-.700 4.700-1.100 7.100-1.100 42.900 0 79.700 24.400 98.500 59.800C359.300 421.400 306.700 448 248 448z"/></svg><span class="t " style="letter-spacing:-0.389px;">User Menu</span><svg class="ic" style="left:216px;top:14px" width="10" height="14" viewBox="0 0 10 14" fill="none" stroke="#8291a8" stroke-width="1.6" stroke-linecap="round" stroke-linejoin="round"><path d="M7.3 2.3 L2.9 6.5 L7.3 10.7"/></svg></div>
<div class="mi" style="top:886px;"><svg class="ic" style="left:13.60px;top:11.50px" width="16.80" height="18.50" viewBox="0 0 448 512" preserveAspectRatio="xMidYMid meet" fill="#444" ><path d="M224 512c35.320 0 63.970-28.650 63.970-64H160.030c0 35.350 28.650 64 63.970 64zm215.390-149.710c-19.320-20.760-55.470-51.990-55.470-154.290 0-77.700-54.480-139.900-127.940-155.160V32c0-17.670-14.320-32-31.980-32s-31.980 14.330-31.980 32v20.840C118.560 68.100 64.080 130.300 64.080 208c0 102.300-36.150 133.530-55.470 154.290-6 6.450-8.660 14.160-8.610 21.710.110 16.400 12.980 32 32.100 32h383.800c19.120 0 32-15.600 32.100-32 .050-7.550-2.610-15.270-8.610-21.710z"/></svg><span class="t " style="letter-spacing:0.121px;">Notifications</span><svg class="ic" style="left:216px;top:14px" width="10" height="14" viewBox="0 0 10 14" fill="none" stroke="#8291a8" stroke-width="1.6" stroke-linecap="round" stroke-linejoin="round"><path d="M7.3 2.3 L2.9 6.5 L7.3 10.7"/></svg></div>
<div class="mi" style="top:927px;"><svg class="ic" style="left:13.00px;top:12.10px" width="18.00" height="17.80" viewBox="0 0 512 512" preserveAspectRatio="xMidYMid meet" fill="#444" ><path d="M216 0h80c13.300 0 24 10.700 24 24v168h87.700c17.800 0 26.700 21.500 14.100 34.100L269.700 378.300c-7.500 7.500-19.800 7.500-27.300 0L90.100 226.100c-12.600-12.600-3.700-34.100 14.100-34.100H192V24c0-13.300 10.700-24 24-24zm296 376v112c0 13.300-10.700 24-24 24H24c-13.300 0-24-10.700-24-24V376c0-13.300 10.700-24 24-24h146.700l49 49c20.100 20.100 52.500 20.100 72.600 0l49-49H488c13.300 0 24 10.700 24 24zm-124 88c0-11-9-20-20-20s-20 9-20 20 9 20 20 20 20-9 20-20zm64 0c0-11-9-20-20-20s-20 9-20 20 9 20 20 20 20-9 20-20z"/></svg><span class="t " style="letter-spacing:-0.374px;">Backup/Restore</span><svg class="ic" style="left:216px;top:14px" width="10" height="14" viewBox="0 0 10 14" fill="none" stroke="#8291a8" stroke-width="1.6" stroke-linecap="round" stroke-linejoin="round"><path d="M7.3 2.3 L2.9 6.5 L7.3 10.7"/></svg></div>
<div class="mi" style="top:968px;"><svg class="ic" style="left:10.50px;top:12.00px" width="22.80" height="18.30" viewBox="0.0 16.0 1920.0 1761.0" preserveAspectRatio="none" fill="#444" ><path d="M896 896C896 1037 781 1152 640 1152C499 1152 384 1037 384 896C384 755 499 640 640 640C781 640 896 755 896 896ZM1664 1408C1664 1478 1607 1536 1536 1536C1466 1536 1408 1479 1408 1408C1408 1338 1466 1280 1536 1280C1606 1280 1664 1338 1664 1408ZM1664 384C1664 454 1607 512 1536 512C1466 512 1408 455 1408 384C1408 314 1466 256 1536 256C1606 256 1664 314 1664 384ZM1280 805C1280 791 1270 778 1256 775L1104 752C1095 724 1083 697 1070 670C1098 631 1128 595 1157 556C1161 550 1164 544 1164 537C1164 509 1046 401 1020 377C1014 372 1007 369 999 369C992 369 985 371 979 376L861 465C837 453 812 442 786 434L763 281C761 267 747 256 733 256H547C533 256 521 266 517 280C504 329 499 384 494 434C467 443 442 453 417 466L302 376C296 372 289 369 281 369C252 369 140 490 120 517C115 523 113 530 113 537C113 544 116 551 120 557C152 595 182 632 210 672C197 697 186 722 178 748L23 772C10 774 0 789 0 802V987C0 1001 10 1014 24 1016L176 1040C185 1068 197 1095 211 1122C182 1161 152 1198 123 1236C119 1242 116 1248 116 1255C116 1284 234 1391 260 1415C266 1420 273 1423 281 1423C288 1423 296 1421 301 1416L419 1327C443 1339 468 1350 494 1358L517 1511C519 1525 533 1536 547 1536H733C747 1536 759 1526 763 1512C776 1463 781 1408 786 1357C813 1349 838 1339 863 1326L978 1416C984 1420 991 1423 999 1423C1028 1423 1140 1301 1160 1274C1165 1269 1167 1262 1167 1255C1167 1247 1164 1241 1160 1235C1128 1197 1098 1160 1070 1120C1083 1095 1094 1070 1102 1044L1257 1020C1270 1018 1280 1003 1280 990ZM1920 1338C1920 1323 1791 1309 1771 1307C1763 1289 1753 1271 1741 1255C1750 1235 1792 1135 1792 1117C1792 1115 1791 1112 1788 1110C1776 1103 1669 1040 1664 1040L1658 1042C1624 1076 1594 1115 1566 1154C1556 1153 1546 1152 1536 1152C1526 1152 1516 1153 1506 1154C1496 1139 1421 1040 1408 1040C1403 1040 1296 1104 1284 1110C1281 1112 1280 1115 1280 1117C1280 1134 1322 1235 1331 1255C1319 1271 1309 1289 1301 1307C1281 1309 1152 1323 1152 1338V1478C1152 1493 1281 1507 1301 1509C1309 1528 1319 1545 1331 1561C1322 1581 1280 1682 1280 1699C1280 1701 1281 1704 1284 1706C1296 1713 1403 1777 1408 1777C1421 1777 1496 1677 1506 1662C1516 1663 1526 1664 1536 1664C1546 1664 1556 1663 1566 1662C1576 1677 1651 1777 1664 1777C1669 1777 1776 1713 1788 1706C1791 1704 1792 1702 1792 1699C1792 1681 1750 1581 1741 1561C1753 1545 1763 1528 1771 1509C1791 1507 1920 1493 1920 1478ZM1920 314C1920 299 1791 285 1771 283C1763 265 1753 247 1741 231C1750 211 1792 111 1792 93C1792 91 1791 88 1788 86C1776 79 1669 16 1664 16L1658 18C1624 52 1594 91 1566 130C1556 129 1546 128 1536 128C1526 128 1516 129 1506 130C1496 115 1421 16 1408 16C1403 16 1296 80 1284 86C1281 88 1280 91 1280 93C1280 110 1322 211 1331 231C1319 247 1309 265 1301 283C1281 285 1152 299 1152 314V454C1152 469 1281 483 1301 485C1309 504 1319 521 1331 537C1322 557 1280 658 1280 675C1280 677 1281 680 1284 682C1296 689 1403 753 1408 753C1421 753 1496 653 1506 638C1516 639 1526 640 1536 640C1546 640 1556 639 1566 638C1576 653 1651 753 1664 753C1669 753 1776 689 1788 682C1791 680 1792 678 1792 675C1792 657 1750 557 1741 537C1753 521 1763 504 1771 485C1791 483 1920 469 1920 454Z"/></svg><span class="t " style="letter-spacing:-0.085px;">Settings</span><svg class="ic" style="left:216px;top:14px" width="10" height="14" viewBox="0 0 10 14" fill="none" stroke="#8291a8" stroke-width="1.6" stroke-linecap="round" stroke-linejoin="round"><path d="M7.3 2.3 L2.9 6.5 L7.3 10.7"/></svg></div>
<div class="mi" style="top:1009px;"><svg class="ic" style="left:13.00px;top:11.50px" width="18.00" height="17.50" viewBox="0 0 16 18" preserveAspectRatio="xMidYMid meet" fill="#444" ><path fill-rule="evenodd" d="M3 0H15a1 1 0 0 1 1 1V13a1 1 0 0 1-1 1v2.6a.7.7 0 0 1 0 1.4H3a3 3 0 0 1-3-3V3a3 3 0 0 1 3-3zM4.2 4.9V6.1H12.6V4.9zM4.2 7.4V8.4H12.6V7.4zM3 14.4a.8.8 0 0 0 0 1.6H13V14.4z"/></svg><span class="t " style="letter-spacing:-0.849px;">Logs</span><svg class="ic" style="left:216px;top:14px" width="10" height="14" viewBox="0 0 10 14" fill="none" stroke="#8291a8" stroke-width="1.6" stroke-linecap="round" stroke-linejoin="round"><path d="M7.3 2.3 L2.9 6.5 L7.3 10.7"/></svg></div>
</div><div id="sscroll"><i></i></div><div class="abs" style="left:0;top:1079px;width:250px;height:1px;background:#d6d6d6"></div>
<div id="panel"><div id="phead">
<span id="title">Variables</span>
<span class="abs" style="left:392px;top:0;line-height:46px;color:#fff"><span class="t " style="letter-spacing:-0.219px;">Project</span></span>
<div class="abs" style="left:472px;top:6px;width:316px;height:32px;background:#fff;border:1px solid #d5e4e4;border-radius:5px;line-height:32px;padding-left:10px;color:#555;font-size:14.5px"><span class="t " style="letter-spacing:-0.037px;">Energy Monitoring Demo</span></div>
<svg class="ic" style="left:770.00px;top:19.80px" width="8.60" height="4.60" viewBox="0.0 640.0 1024.0 576.0" preserveAspectRatio="xMidYMid meet" fill="#444" ><path d="M1024 704C1024 669 995 640 960 640H64C29 640 0 669 0 704C0 721 7 737 19 749L467 1197C479 1209 495 1216 512 1216C529 1216 545 1209 557 1197L1005 749C1017 737 1024 721 1024 704Z"/></svg>
<div class="abs" style="left:1182px;top:10px;width:72px;height:24px;border:1px solid #e4dfdf;border-radius:12px"></div>
<span class="abs" style="left:1194px;top:10px;line-height:23px;color:#fff"><span class="t " style="letter-spacing:-0.141px;">Live</span></span>
<div class="abs" style="left:1231px;top:10.6px;width:22px;height:22px;border-radius:11px;background:#fff;box-shadow:0 1px 2px rgba(0,0,0,.35)"></div>
<svg class="ic" style="left:1290.20px;top:11.80px" width="6.30" height="19.50" viewBox="24 8 144 496" preserveAspectRatio="none" fill="#fff" ><path d="M96 184c39.800 0 72 32.200 72 72s-32.200 72-72 72-72-32.200-72-72 32.200-72 72-72zM24 80c0 39.800 32.200 72 72 72s72-32.200 72-72S135.800 8 96 8 24 40.200 24 80zm0 352c0 39.800 32.200 72 72 72s72-32.200 72-72-32.200-72-72-72-72 32.200-72 72z"/></svg>
<svg class="ic" style="left:1325.80px;top:11.50px" width="20.80" height="20.30" viewBox="8 8 496 496" preserveAspectRatio="xMidYMid meet" fill="#fff" ><path d="M370.720 133.280C339.458 104.008 298.888 87.962 255.848 88c-77.458.068-144.328 53.178-162.791 126.850-1.344 5.363-6.122 9.150-11.651 9.150H24.103c-7.498 0-13.194-6.807-11.807-14.176C33.933 94.924 134.813 8 256 8c66.448 0 126.791 26.136 171.315 68.685L463.030 40.970C478.149 25.851 504 36.559 504 57.941V192c0 13.255-10.745 24-24 24H345.941c-21.382 0-32.090-25.851-16.971-40.971l41.750-41.749zM32 296h134.059c21.382 0 32.090 25.851 16.971 40.971l-41.750 41.750c31.262 29.273 71.835 45.319 114.876 45.280 77.418-.070 144.315-53.144 162.787-126.849 1.344-5.363 6.122-9.150 11.651-9.150h57.304c7.498 0 13.194 6.807 11.807 14.176C478.067 417.076 377.187 504 256 504c-66.448 0-126.791-26.136-171.315-68.685L48.970 471.030C33.851 486.149 8 475.441 8 454.059V320c0-13.255 10.745-24 24-24z"/></svg>
<svg class="ic" style="left:1368.00px;top:11.40px" width="23.60" height="20.40" viewBox="0 0 576 512" preserveAspectRatio="xMidYMid meet" fill="#fff" ><path d="M402.300 344.900l32-32c5-5 13.700-1.500 13.700 5.700V464c0 26.500-21.500 48-48 48H48c-26.500 0-48-21.500-48-48V112c0-26.500 21.500-48 48-48h273.500c7.100 0 10.700 8.600 5.700 13.700l-32 32c-1.500 1.500-3.500 2.300-5.700 2.300H48v352h352V350.500c0-2.100.8-4.100 2.300-5.600zm156.600-201.800L296.300 405.700l-90.400 10c-26.200 2.900-48.500-19.200-45.600-45.600l10-90.400L432.900 17.100c22.900-22.900 59.900-22.900 82.700 0l43.200 43.200c22.900 22.900 22.900 60 .1 82.800zM460.100 174L402 115.900 216.200 301.800l-7.300 65.300 65.300-7.300L460.100 174zm64.800-79.700l-43.200-43.200c-4.100-4.100-10.800-4.100-14.800 0L436 82l58.100 58.100 30.900-30.900c4-4.200 4-10.800-.1-14.900z"/></svg>
<svg class="ic" style="left:1409.80px;top:11.40px" width="20.60" height="20.20" viewBox="0 0 512 512" preserveAspectRatio="xMidYMid meet" fill="#fff" ><path d="M505 442.700L405.300 343c-4.500-4.500-10.600-7-17-7H372c27.600-35.300 44-79.700 44-128C416 93.100 322.900 0 208 0S0 93.100 0 208s93.100 208 208 208c48.300 0 92.700-16.400 128-44v16.300c0 6.400 2.500 12.500 7 17l99.700 99.700c9.400 9.400 24.600 9.400 33.900 0l28.300-28.300c9.400-9.400 9.400-24.600.1-34zM208 336c-70.700 0-128-57.200-128-128 0-70.700 57.200-128 128-128 70.700 0 128 57.200 128 128 0 70.700-57.200 128-128 128z"/></svg>
<svg class="ic" style="left:1452.60px;top:11.20px" width="18.80" height="20.50" viewBox="0 0 448 512" preserveAspectRatio="none" fill="#fff" ><path d="M432 32H312l-9.400-18.700A24 24 0 0 0 281.100 0H166.800a23.720 23.720 0 0 0-21.400 13.300L136 32H16A16 16 0 0 0 0 48v32a16 16 0 0 0 16 16h416a16 16 0 0 0 16-16V48a16 16 0 0 0-16-16zM53.200 467a48 48 0 0 0 47.900 45h245.800a48 48 0 0 0 47.900-45L416 128H32z"/></svg>
<svg class="ic" style="left:1508.00px;top:11.80px" width="20.40" height="20.10" viewBox="0 0 512 512" preserveAspectRatio="xMidYMid meet" fill="#fff" ><path d="M464 0c26.510 0 48 21.490 48 48v288c0 26.510-21.490 48-48 48H176c-26.510 0-48-21.490-48-48V48c0-26.510 21.490-48 48-48h288M176 416c-44.112 0-80-35.888-80-80V128H48c-26.510 0-48 21.490-48 48v288c0 26.510 21.490 48 48 48h288c26.510 0 48-21.490 48-48v-48H176z"/></svg>
<svg class="ic" style="left:1551.00px;top:19.80px" width="18.00" height="4.50" viewBox="0 208 448 96" preserveAspectRatio="none" fill="#fff" ><path d="M416 208H32c-17.670 0-32 14.330-32 32v32c0 17.670 14.330 32 32 32h384c17.670 0 32-14.330 32-32v-32c0-17.670-14.330-32-32-32z"/></svg>
<svg class="ic" style="left:1591.60px;top:11.80px" width="20.40" height="20.20" viewBox="0 0 512 512" preserveAspectRatio="xMidYMid meet" fill="#fff" ><path d="M497.900 142.100l-46.100 46.100c-4.700 4.700-12.300 4.700-17 0l-111-111c-4.700-4.700-4.700-12.300 0-17l46.100-46.100c18.700-18.700 49.100-18.700 67.900 0l60.100 60.100c18.800 18.700 18.800 49.100 0 67.900zM284.200 99.800L21.600 362.400.4 483.900c-2.900 16.400 11.400 30.600 27.800 27.800l121.500-21.300 262.600-262.600c4.700-4.700 4.700-12.300 0-17l-111-111c-4.800-4.700-12.400-4.700-17.100 0zM124.100 339.900c-5.500-5.500-5.500-14.300 0-19.800l154-154c5.500-5.500 14.300-5.500 19.800 0s5.500 14.300 0 19.800l-154 154c-5.500 5.500-14.300 5.500-19.800 0zM88 424h48v36.300l-64.500 11.300-31.100-31.100L51.700 376H88v48z"/></svg>
<svg class="ic" style="left:1635.00px;top:12.90px" width="18.40" height="18.40" viewBox="0 32 448 448" preserveAspectRatio="xMidYMid meet" fill="#fff" ><path d="M416 208H272V64c0-17.670-14.330-32-32-32h-32c-17.670 0-32 14.330-32 32v144H32c-17.670 0-32 14.330-32 32v32c0 17.670 14.330 32 32 32h144v144c0 17.670 14.330 32 32 32h32c17.670 0 32-14.330 32-32V304h144c17.670 0 32-14.330 32-32v-32c0-17.670-14.330-32-32-32z"/></svg>
</div>
<div id="pline"></div><div id="thead">
<div class="hc" style="left:0px;width:200px"><div class="fl"><div class="fi"></div></div><span class="t" style="top:46px;line-height:44px;letter-spacing:-0.594px;">Name</span></div>
<div class="hc" style="left:200px;width:200px"><div class="fl"><div class="fi"></div></div><span class="t" style="top:46px;line-height:44px;letter-spacing:-0.017px;">Description</span></div>
<div class="hc" style="left:400px;width:200px"><div class="fl"><div class="fi"></div></div><span class="t" style="top:46px;line-height:44px;letter-spacing:-0.233px;">Connection</span></div>
<div class="hc" style="left:600px;width:200px"><div class="fl"><div class="fi"></div></div><span class="t" style="top:46px;line-height:44px;letter-spacing:-0.491px;">Device</span></div>
<div class="hc" style="left:800px;width:200px"><div class="fl"><div class="fi"></div></div><span class="t" style="top:46px;line-height:44px;letter-spacing:-0.570px;">Frame</span></div>
<div class="hc" style="left:1000px;width:200px"><span class="t" style="top:0;line-height:89px;letter-spacing:-0.900px;">Code</span></div>
<div class="hc" style="left:1200px;width:200px"><span class="t" style="top:0;line-height:89px;letter-spacing:-0.391px;">Date</span></div>
<div class="hc" style="left:1400px;width:200px"><span class="t" style="top:0;line-height:89px;letter-spacing:-0.277px;">Value</span></div>
<div class="hc" style="left:1600px;width:63px"><span class="t" style="top:0;line-height:89px;letter-spacing:0.354px;">Unit</span></div>
</div>
<div class="row" style="top:135px"><div class="c" style="left:0px;width:200px;"><span class="t " style="letter-spacing:-0.517px;">ActivePower_kW</span></div><div class="c" style="left:200px;width:200px;"><span class="t " style="letter-spacing:-0.019px;">Total active power</span></div><div class="c" style="left:400px;width:200px;"><span class="t " style="letter-spacing:-0.874px;">LOCAL-Energy</span></div><div class="c" style="left:600px;width:200px;"><span class="t " style="letter-spacing:-0.365px;">Energy-Device</span></div><div class="c" style="left:800px;width:200px;"><span class="t " style="letter-spacing:-0.382px;">Energy-Frame</span></div><div class="c" style="left:1000px;width:200px;"></div><div class="c d" style="left:1200px;width:200px;"><span class="t " style="letter-spacing:0.190px;">2026-03-11 09:34:44:108</span></div><div class="c v" style="left:1400px;width:200px;"><span class="t " style="letter-spacing:0.231px;">418.92</span></div><div class="c" style="left:1600px;width:62px;border-right:none;"><span class="t " style="letter-spacing:-0.400px;">kW</span></div></div>
<div class="row s" style="top:160px"><div class="c" style="left:0px;width:200px;"><span class="t " style="letter-spacing:-0.559px;">Current_A</span></div><div class="c" style="left:200px;width:200px;"><span class="t " style="letter-spacing:0.020px;">Line current</span></div><div class="c" style="left:400px;width:200px;"><span class="t " style="letter-spacing:-0.874px;">LOCAL-Energy</span></div><div class="c" style="left:600px;width:200px;"><span class="t " style="letter-spacing:-0.365px;">Energy-Device</span></div><div class="c" style="left:800px;width:200px;"><span class="t " style="letter-spacing:-0.382px;">Energy-Frame</span></div><div class="c" style="left:1000px;width:200px;"></div><div class="c d" style="left:1200px;width:200px;"><span class="t " style="letter-spacing:0.190px;">2026-03-11 09:34:44:108</span></div><div class="c v" style="left:1400px;width:200px;"><span class="t " style="letter-spacing:0.211px;">42.91</span></div><div class="c" style="left:1600px;width:62px;border-right:none;"><span class="t " style="letter-spacing:-0.400px;">A</span></div></div>
<div class="row" style="top:185px"><div class="c" style="left:0px;width:200px;"><span class="t " style="letter-spacing:-0.719px;">Demand_kW</span></div><div class="c" style="left:200px;width:200px;"><span class="t " style="letter-spacing:-0.355px;">Peak demand power</span></div><div class="c" style="left:400px;width:200px;"><span class="t " style="letter-spacing:-0.874px;">LOCAL-Energy</span></div><div class="c" style="left:600px;width:200px;"><span class="t " style="letter-spacing:-0.365px;">Energy-Device</span></div><div class="c" style="left:800px;width:200px;"><span class="t " style="letter-spacing:-0.382px;">Energy-Frame</span></div><div class="c" style="left:1000px;width:200px;"></div><div class="c d" style="left:1200px;width:200px;"><span class="t " style="letter-spacing:0.190px;">2026-03-11 09:34:44:108</span></div><div class="c v" style="left:1400px;width:200px;"><span class="t " style="letter-spacing:0.211px;">379.4</span></div><div class="c" style="left:1600px;width:62px;border-right:none;"><span class="t " style="letter-spacing:-0.400px;">kW</span></div></div>
<div class="row s" style="top:210px"><div class="c" style="left:0px;width:200px;"><span class="t " style="letter-spacing:-0.674px;">Energy_kWh</span></div><div class="c" style="left:200px;width:200px;"><span class="t " style="letter-spacing:-0.118px;">Cumulative energy consumption</span></div><div class="c" style="left:400px;width:200px;"><span class="t " style="letter-spacing:-0.874px;">LOCAL-Energy</span></div><div class="c" style="left:600px;width:200px;"><span class="t " style="letter-spacing:-0.365px;">Energy-Device</span></div><div class="c" style="left:800px;width:200px;"><span class="t " style="letter-spacing:-0.382px;">Energy-Frame</span></div><div class="c" style="left:1000px;width:200px;"></div><div class="c d" style="left:1200px;width:200px;"><span class="t " style="letter-spacing:0.190px;">2026-03-11 09:34:44:108</span></div><div class="c v" style="left:1400px;width:200px;"><span class="t " style="letter-spacing:0.245px;">51360.5</span></div><div class="c" style="left:1600px;width:62px;border-right:none;"><span class="t " style="letter-spacing:-0.758px;">kWh</span></div></div>
<div class="row" style="top:235px"><div class="c" style="left:0px;width:200px;"><span class="t " style="letter-spacing:-0.605px;">Frequency_Hz</span></div><div class="c" style="left:200px;width:200px;"><span class="t " style="letter-spacing:-0.222px;">Grid frequency</span></div><div class="c" style="left:400px;width:200px;"><span class="t " style="letter-spacing:-0.874px;">LOCAL-Energy</span></div><div class="c" style="left:600px;width:200px;"><span class="t " style="letter-spacing:-0.365px;">Energy-Device</span></div><div class="c" style="left:800px;width:200px;"><span class="t " style="letter-spacing:-0.382px;">Energy-Frame</span></div><div class="c" style="left:1000px;width:200px;"></div><div class="c d" style="left:1200px;width:200px;"><span class="t " style="letter-spacing:0.190px;">2026-03-11 09:34:44:108</span></div><div class="c v" style="left:1400px;width:200px;"><span class="t " style="letter-spacing:0.211px;">49.96</span></div><div class="c" style="left:1600px;width:62px;border-right:none;"><span class="t " style="letter-spacing:-0.400px;">Hz</span></div></div>
<div class="row s" style="top:260px"><div class="c" style="left:0px;width:200px;"><span class="t " style="letter-spacing:-0.326px;">GridStatus</span></div><div class="c" style="left:200px;width:200px;"><span class="t " style="letter-spacing:-0.127px;">Grid connection status</span></div><div class="c" style="left:400px;width:200px;"><span class="t " style="letter-spacing:-0.874px;">LOCAL-Energy</span></div><div class="c" style="left:600px;width:200px;"><span class="t " style="letter-spacing:-0.365px;">Energy-Device</span></div><div class="c" style="left:800px;width:200px;"><span class="t " style="letter-spacing:-0.382px;">Energy-Frame</span></div><div class="c" style="left:1000px;width:200px;"></div><div class="c d" style="left:1200px;width:200px;"><span class="t " style="letter-spacing:0.190px;">2026-03-11 09:34:44:108</span></div><div class="c v" style="left:1400px;width:200px;"><span class="t " style="letter-spacing:-0.562px;">true</span></div><div class="c" style="left:1600px;width:62px;border-right:none;"></div></div>
<div class="row" style="top:285px"><div class="c" style="left:0px;width:200px;"><span class="t " style="letter-spacing:-0.380px;">PowerFactor</span></div><div class="c" style="left:200px;width:200px;"><span class="t " style="letter-spacing:-0.175px;">Power factor</span></div><div class="c" style="left:400px;width:200px;"><span class="t " style="letter-spacing:-0.874px;">LOCAL-Energy</span></div><div class="c" style="left:600px;width:200px;"><span class="t " style="letter-spacing:-0.365px;">Energy-Device</span></div><div class="c" style="left:800px;width:200px;"><span class="t " style="letter-spacing:-0.382px;">Energy-Frame</span></div><div class="c" style="left:1000px;width:200px;"></div><div class="c d" style="left:1200px;width:200px;"><span class="t " style="letter-spacing:0.190px;">2026-03-11 09:34:44:108</span></div><div class="c v" style="left:1400px;width:200px;"><span class="t " style="letter-spacing:0.211px;">0.924</span></div><div class="c" style="left:1600px;width:62px;border-right:none;"></div></div>
<div class="row s" style="top:310px"><div class="c" style="left:0px;width:200px;"><span class="t " style="letter-spacing:-0.665px;">ReactivePower_kVAR</span></div><div class="c" style="left:200px;width:200px;"><span class="t " style="letter-spacing:-0.281px;">Reactive power</span></div><div class="c" style="left:400px;width:200px;"><span class="t " style="letter-spacing:-0.874px;">LOCAL-Energy</span></div><div class="c" style="left:600px;width:200px;"><span class="t " style="letter-spacing:-0.365px;">Energy-Device</span></div><div class="c" style="left:800px;width:200px;"><span class="t " style="letter-spacing:-0.382px;">Energy-Frame</span></div><div class="c" style="left:1000px;width:200px;"></div><div class="c d" style="left:1200px;width:200px;"><span class="t " style="letter-spacing:0.190px;">2026-03-11 09:34:44:108</span></div><div class="c v" style="left:1400px;width:200px;"><span class="t " style="letter-spacing:0.231px;">205.47</span></div><div class="c" style="left:1600px;width:62px;border-right:none;"><span class="t " style="letter-spacing:-0.900px;">kVAR</span></div></div>
<div class="row" style="top:335px"><div class="c" style="left:0px;width:200px;"><span class="t " style="letter-spacing:-0.504px;">Temperature_C</span></div><div class="c" style="left:200px;width:200px;"><span class="t " style="letter-spacing:-0.136px;">Panel temperature</span></div><div class="c" style="left:400px;width:200px;"><span class="t " style="letter-spacing:-0.874px;">LOCAL-Energy</span></div><div class="c" style="left:600px;width:200px;"><span class="t " style="letter-spacing:-0.365px;">Energy-Device</span></div><div class="c" style="left:800px;width:200px;"><span class="t " style="letter-spacing:-0.382px;">Energy-Frame</span></div><div class="c" style="left:1000px;width:200px;"></div><div class="c d" style="left:1200px;width:200px;"><span class="t " style="letter-spacing:0.190px;">2026-03-11 09:34:44:108</span></div><div class="c v" style="left:1400px;width:200px;"><span class="t " style="letter-spacing:0.172px;">53.9</span></div><div class="c" style="left:1600px;width:62px;border-right:none;"><span class="t " style="letter-spacing:-0.400px;">°C</span></div></div>
<div class="row s" style="top:360px"><div class="c" style="left:0px;width:200px;"><span class="t " style="letter-spacing:-0.498px;">Voltage_V</span></div><div class="c" style="left:200px;width:200px;"><span class="t " style="letter-spacing:0.007px;">Line voltage</span></div><div class="c" style="left:400px;width:200px;"><span class="t " style="letter-spacing:-0.874px;">LOCAL-Energy</span></div><div class="c" style="left:600px;width:200px;"><span class="t " style="letter-spacing:-0.365px;">Energy-Device</span></div><div class="c" style="left:800px;width:200px;"><span class="t " style="letter-spacing:-0.382px;">Energy-Frame</span></div><div class="c" style="left:1000px;width:200px;"></div><div class="c d" style="left:1200px;width:200px;"><span class="t " style="letter-spacing:0.190px;">2026-03-11 09:34:44:108</span></div><div class="c v" style="left:1400px;width:200px;"><span class="t " style="letter-spacing:0.211px;">228.8</span></div><div class="c" style="left:1600px;width:62px;border-right:none;"><span class="t " style="letter-spacing:-0.400px;">V</span></div></div>
<div class="abs" style="left:1662px;top:135px;width:6px;height:860px;background:#f1f1f1"></div>
<div class="abs" style="left:0;top:989px;width:1662px;height:6px;background:#f1f1f1"></div>
<div class="abs" style="left:0;top:989px;width:880px;height:6px;background:#a9a9a9"></div>
<div class="btn" style="left:1px;width:56px;"><span class="t " style="letter-spacing:-0.400px;">&lt;&lt;</span></div>
<div class="btn" style="left:60px;width:56px;"><span class="t " style="letter-spacing:-0.400px;">&lt;</span></div>
<div class="btn" style="left:119px;width:56px;background:#4f6d87;"><span class="t " style="letter-spacing:0.031px;">1</span></div>
<div class="btn" style="left:178px;width:56px;"><span class="t " style="letter-spacing:-0.400px;">&gt;</span></div>
<div class="btn" style="left:237px;width:56px;"><span class="t " style="letter-spacing:-0.400px;">&gt;&gt;</span></div>
<div class="btn" style="left:296px;width:166px"><span class="t " style="letter-spacing:-0.052px;">Total elements: 10</span></div>
</div>
</body></html>
